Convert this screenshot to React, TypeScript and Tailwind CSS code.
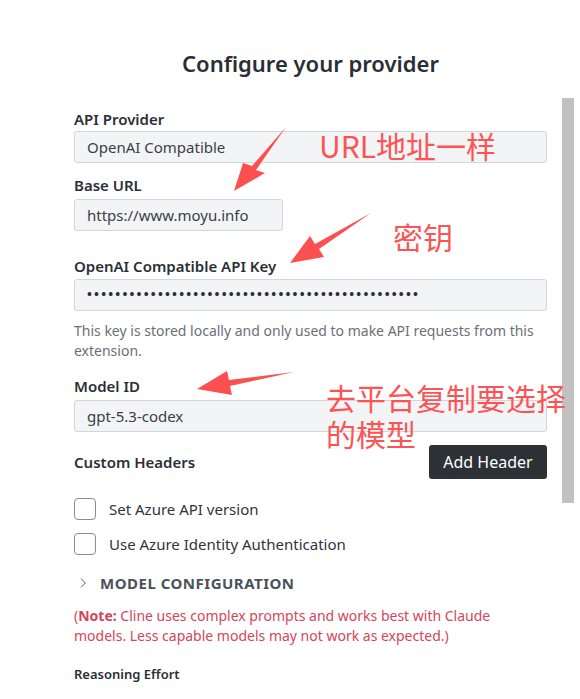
import React from "react";

const font = { fontFamily: '"Noto Sans", "Open Sans", sans-serif' };
const cjk = { fontFamily: '"Noto Sans CJK SC", "Noto Sans", sans-serif' };

function Label({ children }: { children: React.ReactNode }) {
  return <div className="text-[15px] leading-[18px] font-semibold text-[#2b2f36]">{children}</div>;
}

function Field({ children, className = "" }: { children: React.ReactNode; className?: string }) {
  return (
    <div
      className={
        "flex items-center h-[32px] px-[12px] bg-[#f3f4f6] border border-[#d3d5d8] rounded-[3px] text-[15px] text-[#3a3f46] " +
        className
      }
    >
      {children}
    </div>
  );
}

function Checkbox({ label }: { label: string }) {
  return (
    <div className="flex items-center h-[22px] gap-[13px]">
      <div className="w-[22px] h-[22px] border border-[#8c8c8c] rounded-[4px] bg-white" />
      <span className="text-[15px] text-[#2f343b]">{label}</span>
    </div>
  );
}

export default function App() {
  return (
    <div className="relative w-[580px] h-[699px] overflow-hidden bg-white" style={font}>
      <div className="flex flex-col pl-[74px] pr-[33px] pt-[48px]">
        <h1 className="h-[30px] text-center text-[22px] leading-[30px] font-semibold text-[#2a2e35]">
          Configure your provider
        </h1>

        <section className="mt-[32px] flex flex-col gap-[3px]">
          <Label>API Provider</Label>
          <Field>OpenAI Compatible</Field>
        </section>

        <section className="mt-[13px] flex flex-col gap-[5px] items-start">
          <Label>Base URL</Label>
          <Field className="w-[209px] h-[31px]">https://www.moyu.info</Field>
        </section>

        <section className="mt-[26px] flex flex-col gap-[4px]">
          <Label>OpenAI Compatible API Key</Label>
          <Field>
            <span className="text-[13px] font-bold tracking-[2.2px] text-[#2a2e35]">{"•".repeat(47)}</span>
          </Field>
          <p className="mt-[6px] text-[14px] leading-[20px] text-[#6b7078]">
            This key is stored locally and only used to make API requests from this extension.
          </p>
        </section>

        <section className="mt-[16px] flex flex-col gap-[5px]">
          <Label>Model ID</Label>
          <Field>gpt-5.3-codex</Field>
        </section>

        <div className="mt-[13px] flex items-center justify-between h-[34px]">
          <Label>Custom Headers</Label>
          <button className="h-[34px] w-[118px] bg-[#2d3136] text-white text-[16px] rounded-[3px]">
            Add Header
          </button>
        </div>

        <div className="mt-[19px] flex flex-col gap-[13px]">
          <Checkbox label="Set Azure API version" />
          <Checkbox label="Use Azure Identity Authentication" />
        </div>

        <div className="mt-[18px] flex items-center h-[20px] gap-[10px] pl-[2px]">
          <svg width="14" height="14" viewBox="0 0 24 24" fill="none" stroke="#4a515b" strokeWidth="1.6" strokeLinecap="round" strokeLinejoin="round">
            <path d="M9 5l7 7-7 7" />
          </svg>
          <span className="text-[15px] font-bold tracking-[0.5px] text-[#4a525c]">MODEL CONFIGURATION</span>
        </div>

        <p className="mt-[13px] text-[14px] leading-[20px] text-[#d4455a]">
          (<span className="font-bold">Note:</span> Cline uses complex prompts and works best with Claude
          <br />
          models. Less capable models may not work as expected.)
        </p>

        <div className="mt-[18px] text-[13px] leading-[20px] font-semibold text-[#2b2f36]">Reasoning Effort</div>
      </div>

      {/* scrollbar thumb (overlay) */}
      <div className="absolute left-[562px] top-[98px] w-[12px] h-[405px] bg-[#c1c1c1]" />

      {/* red annotations drawn over the screenshot */}
      <svg className="absolute left-0 top-0 pointer-events-none" width="580" height="699" viewBox="0 0 580 699">
        <polygon points="286,127 256,170 265,173 234,191 243,163 252,166" fill="#fc5050" />
        <polygon points="371,213 319,249 324,257 290,263 310,236 315,244" fill="#fc5050" />
        <polygon points="294,372 230,386 232,395 197,389 227,371 229,380" fill="#fc5050" />
      </svg>
      <div className="absolute left-[319px] top-[128px] text-[30px] leading-[34px] text-[#fc5454] whitespace-nowrap" style={cjk}>
        URL地址一样
      </div>
      <div className="absolute left-[393px] top-[219px] text-[30px] leading-[34px] text-[#fc5454] whitespace-nowrap" style={cjk}>
        密钥
      </div>
      <div className="absolute left-[326px] top-[379px] text-[30px] leading-[36px] text-[#fc5454] whitespace-nowrap" style={cjk}>
        去平台复制要选择
        <br />
        的模型
      </div>
    </div>
  );
}
